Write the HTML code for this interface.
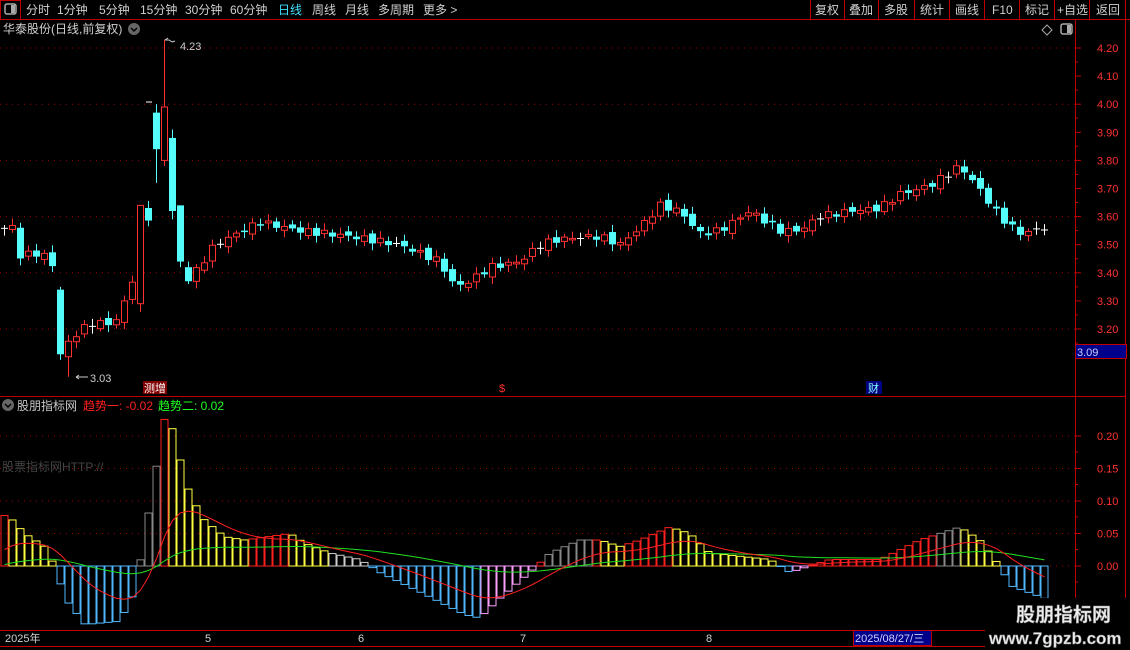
<!DOCTYPE html>
<html><head><meta charset="utf-8"><style>
html,body{margin:0;padding:0;background:#000;width:1130px;height:650px;overflow:hidden}
svg{display:block}
text{font-family:"Liberation Sans","Noto Sans CJK SC",sans-serif}
</style></head><body>
<svg id="s" width="1130" height="650" xmlns="http://www.w3.org/2000/svg">
<rect width="1130" height="650" fill="#000"/>
<line x1="0" y1="19.5" x2="1130" y2="19.5" stroke="#c00000"/>
<rect x="0.5" y="0.5" width="20" height="19" fill="none" stroke="#c00000"/>
<rect x="5" y="4" width="11" height="10" rx="2" fill="none" stroke="#aaa" stroke-width="1.5"/><rect x="11" y="5" width="4" height="8" fill="#aaa"/>
<g font-size="12" fill="#d0d0d0">
<text x="26" y="14">分时</text><text x="57" y="14">1分钟</text><text x="99" y="14">5分钟</text><text x="140" y="14">15分钟</text><text x="185" y="14">30分钟</text><text x="230" y="14">60分钟</text>
<text x="278" y="14" fill="#40e0ff">日线</text><text x="312" y="14">周线</text><text x="345" y="14">月线</text><text x="378" y="14">多周期</text><text x="423" y="14">更多 &gt;</text>
</g>
<g stroke="#c00000"><line x1="810.5" y1="0" x2="810.5" y2="19"/><line x1="844.5" y1="0" x2="844.5" y2="19"/><line x1="878.5" y1="0" x2="878.5" y2="19"/><line x1="914.5" y1="0" x2="914.5" y2="19"/><line x1="949.5" y1="0" x2="949.5" y2="19"/><line x1="984.5" y1="0" x2="984.5" y2="19"/><line x1="1019.5" y1="0" x2="1019.5" y2="19"/><line x1="1054.5" y1="0" x2="1054.5" y2="19"/><line x1="1089.5" y1="0" x2="1089.5" y2="19"/><line x1="1125.5" y1="0" x2="1125.5" y2="19"/></g>
<g font-size="12" fill="#d0d0d0"><text x="815" y="14">复权</text><text x="849" y="14">叠加</text><text x="884" y="14">多股</text><text x="920" y="14">统计</text><text x="955" y="14">画线</text><text x="992" y="14">F10</text><text x="1025" y="14">标记</text><text x="1057" y="14">+自选</text><text x="1096" y="14">返回</text></g>
<text x="3" y="33" font-size="12" fill="#d0d0d0">华泰股份(日线,前复权)</text>
<circle cx="134" cy="29" r="6" fill="#666"/><path d="M131 28l3 3 3-3" stroke="#000" fill="none" stroke-width="1.5"/>
<path d="M1047 25l5 5-5 5-5-5z" fill="none" stroke="#aaa"/>
<rect x="1061" y="24" width="11" height="10" rx="2" fill="none" stroke="#aaa" stroke-width="1.5"/><rect x="1067" y="25" width="4" height="8" fill="#aaa"/>
<line x1="1075.5" y1="20" x2="1075.5" y2="630" stroke="#c00000"/>
<line x1="1125.5" y1="20" x2="1125.5" y2="650" stroke="#c00000"/>
<line x1="0" y1="396.5" x2="1125" y2="396.5" stroke="#c00000"/>
<line x1="0" y1="630.5" x2="985" y2="630.5" stroke="#c00000"/>
<line x1="0" y1="646.5" x2="985" y2="646.5" stroke="#c00000"/>
<rect x="1075.5" y="344.5" width="51" height="14" fill="#00008b" stroke="#c00000"/>
<text x="1077" y="356" font-size="11" fill="#d0d0ff">3.09</text>
<g id="g"></g>
<circle cx="8" cy="405" r="6" fill="#666"/><path d="M5 404l3 3 3-3" stroke="#000" fill="none" stroke-width="1.5"/>
<text x="17" y="410" font-size="12" fill="#c8c8c8">股朋指标网</text>
<text x="83" y="410" font-size="12" fill="#ff2020">趋势一: -0.02</text>
<text x="158" y="410" font-size="12" fill="#20ff20">趋势二: 0.02</text>
<text x="2" y="471" font-size="12" fill="#444">股票指标网HTTP://</text>
<rect x="143" y="381" width="24" height="13" fill="#800000"/><text x="144" y="392" font-size="11" fill="#fff">测增</text>
<text x="499" y="392" font-size="11" fill="#ff3030">$</text>
<rect x="866" y="381" width="16" height="13" fill="#000080"/><text x="868" y="392" font-size="11" fill="#8ff">财</text>
<g font-size="11" fill="#d0d0d0"><text x="5" y="642">2025年</text><text x="205" y="642">5</text><text x="358" y="642">6</text><text x="520" y="642">7</text><text x="706" y="642">8</text></g>
<rect x="853.5" y="630.5" width="78" height="15" fill="#00008b" stroke="#c00000"/>
<text x="855" y="642" font-size="11" fill="#d0d0ff">2025/08/27/三</text>
<rect x="985" y="598" width="145" height="52" fill="#000"/>
<text x="1016" y="621" font-size="19" font-weight="bold" fill="#eee" stroke="#888" stroke-width="0.5">股朋指标网</text>
<text x="989" y="644" font-size="17" font-weight="bold" fill="#eee" stroke="#888" stroke-width="0.5">www.7gpzb.com</text>
</svg>
<script>
var g=document.getElementById('g'),h='';
function P(p){return 48+(4.20-p)*281;}
function V(v){return 566-v*650;}
[4.2,4.0,3.8,3.6,3.4,3.2].forEach(function(p){h+='<line x1="0" y1="'+P(p)+'" x2="1075" y2="'+P(p)+'" stroke="#a00000" stroke-dasharray="1,5"/>';});
[0.2,0.15,0.1,0.05,0].forEach(function(v){h+='<line x1="0" y1="'+V(v)+'" x2="1075" y2="'+V(v)+'" stroke="#a00000" stroke-dasharray="1,5"/>';});
for(var k=0;k<=10;k++){var p=4.2-k*0.1,y=P(p);h+='<line x1="1075" y1="'+y+'" x2="1081" y2="'+y+'" stroke="#c00000"/><text x="1097" y="'+(y+4)+'" font-size="11" fill="#ff3232">'+p.toFixed(2)+'</text>';
 h+='<line x1="1075" y1="'+(y+14)+'" x2="1078" y2="'+(y+14)+'" stroke="#c00000"/>';}
[0.2,0.15,0.1,0.05,0].forEach(function(v){var y=V(v);h+='<line x1="1075" y1="'+y+'" x2="1081" y2="'+y+'" stroke="#c00000"/><text x="1097" y="'+(y+4)+'" font-size="11" fill="#ff3232">'+v.toFixed(2)+'</text><line x1="1075" y1="'+(y+16)+'" x2="1078" y2="'+(y+16)+'" stroke="#c00000"/>';});
function interp(pts,x){for(var i=1;i<pts.length;i++){if(x<=pts[i][0]){var a=pts[i-1],b=pts[i];return a[1]+(b[1]-a[1])*(x-a[0])/(b[0]-a[0]);}}return pts[pts.length-1][1];}
var path=[[0,3.55],[12,3.57],[20,3.46],[36,3.47],[52,3.45],[60,3.12],[68,3.15],[76,3.18],[90,3.22],[115,3.22],[125,3.30],[133,3.38],[141,3.64],[189,3.37],[197,3.41],[215,3.50],[260,3.58],[300,3.55],[350,3.53],[400,3.50],[440,3.44],[455,3.35],[470,3.37],[490,3.42],[520,3.44],[540,3.50],[560,3.52],[600,3.53],[620,3.50],[640,3.56],[660,3.64],[680,3.62],[700,3.54],[720,3.55],[750,3.62],[780,3.55],[800,3.55],[820,3.60],[850,3.62],[880,3.63],[900,3.68],[930,3.71],[960,3.78],[975,3.72],[1000,3.60],[1020,3.54],[1045,3.56]];
var ov={7:[3.34,3.11,3.35,3.09],17:[3.29,3.64,3.64,3.26],19:[3.97,3.84,4.0,3.72],20:[3.80,3.99,4.23,3.78],21:[3.88,3.62,3.91,3.59],22:[3.64,3.44,3.64,3.42],23:[3.42,3.37,3.44,3.36]};
var prev=3.55;
for(var i=0;i<131;i++){var x=4.5+i*8,c=interp(path,x)+0.012*Math.sin(i*2.7),o=prev+0.01*Math.cos(i*1.9),hi,lo;
 if(ov[i]){o=ov[i][0];c=ov[i][1];hi=ov[i][2];lo=ov[i][3];}else{hi=Math.max(o,c)+0.01+0.015*Math.abs(Math.sin(i*1.3));lo=Math.min(o,c)-0.01-0.015*Math.abs(Math.cos(i*1.7));}
 if(i==8)lo=3.03;
 prev=c;var up=c>=o,col=up?'#ff3030':'#54fcfc';if(Math.abs(c-o)<0.004)col='#fff';
 var yt=P(Math.max(o,c)),yb=P(Math.min(o,c));if(yb-yt<1)yb=yt+1;
 h+='<line x1="'+x+'" y1="'+P(hi)+'" x2="'+x+'" y2="'+P(lo)+'" stroke="'+col+'"/>';
 if(up&&col!='#fff')h+='<rect x="'+(x-3)+'" y="'+yt+'" width="6" height="'+(yb-yt)+'" fill="#000" stroke="'+col+'"/>';
 else h+='<rect x="'+(x-3.5)+'" y="'+yt+'" width="7" height="'+(yb-yt)+'" fill="'+col+'"/>';}
h+='<path d="M165 40l3-2M165 40h4l3 2 3-1" stroke="#ccc" fill="none"/><text x="180" y="50" font-size="11" fill="#ccc">4.23</text>';
h+='<path d="M76 377h12M76 377l3-2M76 377l3 2" stroke="#ccc" fill="none"/><text x="90" y="382" font-size="11" fill="#ccc">3.03</text>';
h+='<line x1="146" y1="102" x2="152" y2="102" stroke="#fff"/>';
var ip=[[0,0.08],[10,0.075],[25,0.05],[45,0.03],[55,0.0],[65,-0.05],[85,-0.09],[120,-0.085],[135,-0.04],[145,0.05],[155,0.14],[165,0.23],[173,0.21],[181,0.16],[190,0.11],[205,0.07],[225,0.045],[245,0.04],[290,0.05],[305,0.035],[330,0.02],[360,0.01],[380,-0.01],[420,-0.04],[465,-0.075],[480,-0.08],[500,-0.05],[530,-0.01],[550,0.02],[580,0.04],[600,0.04],[620,0.03],[640,0.04],[670,0.06],[690,0.05],[710,0.02],[740,0.015],[770,0.01],[790,-0.01],[810,0.0],[830,0.01],[860,0.01],[880,0.01],[920,0.04],[960,0.06],[980,0.04],[1000,0.0],[1010,-0.03],[1045,-0.05]];
var vals=[],pv=0;
for(var i=0;i<131;i++){var x=4.5+i*8,v=interp(ip,x);vals.push(v);
 var col;if(v>=0){col=v>=pv?'#ff2020':'#ffff40';if(v>=pv&&((x>140&&x<162)||(x>545&&x<590)||(x>940&&x<970)))col='#888';if(v<0.022&&v<pv&&x>300&&x<370)col='#ccc';}
 else{col=v<=pv?'#50b8ff':'#ffa0ff';if(x<140)col='#50b8ff';}
 pv=v;var y1=V(Math.max(v,0)),y2=V(Math.min(v,0));
 h+='<rect x="'+(x-3.5)+'" y="'+y1+'" width="7" height="'+Math.max(y2-y1,0.5)+'" fill="none" stroke="'+col+'"/>';}
var r=[],gr=[],e=0.02,e2=-0.01;
for(var i=0;i<131;i++){e+=(vals[i]-e)*0.2;r.push(e*0.8);e2+=(vals[i]-e2)*0.06;gr.push(e2);}
var pr='',pg='';
for(var i=0;i<131;i++){var x=4.5+i*8;pr+=(i?'L':'M')+x+' '+V(r[i]).toFixed(1);pg+=(i?'L':'M')+x+' '+V(gr[i]*0.6+0.005).toFixed(1);}
h+='<path d="'+pg+'" stroke="#20e020" fill="none"/><path d="'+pr+'" stroke="#ff2020" fill="none"/>';
g.innerHTML=h;
</script>
</body></html>
